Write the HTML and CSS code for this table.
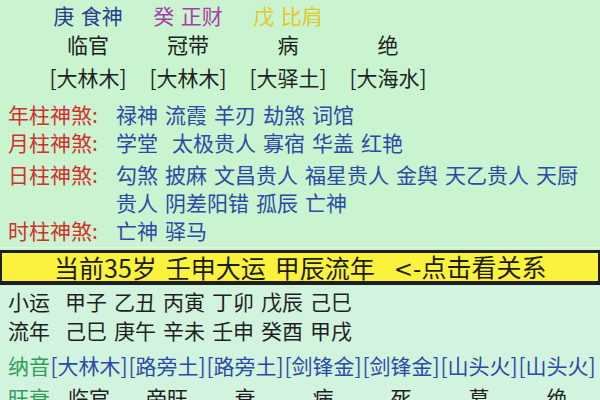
FILE: index.html
```html
<!DOCTYPE html>
<html lang="zh-CN">
<head>
<meta charset="utf-8">
<link rel="stylesheet" href="styles.css">
</head>
<body>
<div class="page">
  <section class="pillars">
    <div class="cell top c-blue">庚 食神</div>
    <div class="cell top c-magenta">癸 正财</div>
    <div class="cell top c-yellow">戊 比肩</div>
    <div class="cell top"></div>
    <div class="cell">临官</div>
    <div class="cell">冠带</div>
    <div class="cell">病</div>
    <div class="cell">绝</div>
    <div class="cell">[大林木]</div>
    <div class="cell">[大林木]</div>
    <div class="cell">[大驿土]</div>
    <div class="cell">[大海水]</div>
  </section>

  <section class="shensha">
    <div class="ss-row">
      <span class="ss-label">年柱神煞:</span>
      <span class="ss-items"><span>禄神</span><span>流霞</span><span>羊刃</span><span>劫煞</span><span>词馆</span></span>
    </div>
    <div class="ss-row">
      <span class="ss-label">月柱神煞:</span>
      <span class="ss-items"><span class="wide">学堂</span><span>太极贵人</span><span>寡宿</span><span>华盖</span><span>红艳</span></span>
    </div>
    <div class="ss-row ss-gap">
      <span class="ss-label">日柱神煞:</span>
      <span class="ss-items"><span>勾煞</span><span>披麻</span><span>文昌贵人</span><span>福星贵人</span><span>金舆</span><span>天乙贵人</span><span>天厨</span></span>
    </div>
    <div class="ss-row">
      <span class="ss-label"></span>
      <span class="ss-items"><span>贵人</span><span>阴差阳错</span><span>孤辰</span><span>亡神</span></span>
    </div>
    <div class="ss-row">
      <span class="ss-label">时柱神煞:</span>
      <span class="ss-items"><span>亡神</span><span>驿马</span></span>
    </div>
  </section>

  <div class="bar">
    <span>当前35岁</span>
    <span>壬申大运</span>
    <span>甲辰流年</span>
    <span class="bar-link"><span class="arrow">&lt;-</span>点击看关系</span>
  </div>

  <section class="yun">
    <div class="yun-row">
      <span class="yun-label">小运</span>
      <span class="yun-items"><span>甲子</span><span>乙丑</span><span>丙寅</span><span>丁卯</span><span>戊辰</span><span>己巳</span></span>
    </div>
    <div class="yun-row">
      <span class="yun-label">流年</span>
      <span class="yun-items"><span>己巳</span><span>庚午</span><span>辛未</span><span>壬申</span><span>癸酉</span><span>甲戌</span></span>
    </div>
    <div class="grid-row nayin">
      <span class="g-label">纳音</span>
      <span class="g-cell">[大林木]</span>
      <span class="g-cell">[路旁土]</span>
      <span class="g-cell">[路旁土]</span>
      <span class="g-cell">[剑锋金]</span>
      <span class="g-cell">[剑锋金]</span>
      <span class="g-cell">[山头火]</span>
      <span class="g-cell">[山头火]</span>
    </div>
    <div class="grid-row wangshuai">
      <span class="g-label">旺衰</span>
      <span class="g-cell">临官</span>
      <span class="g-cell">帝旺</span>
      <span class="g-cell">衰</span>
      <span class="g-cell">病</span>
      <span class="g-cell">死</span>
      <span class="g-cell">墓</span>
      <span class="g-cell">绝</span>
    </div>
  </section>
</div>
</body>
</html>
```

FILE: styles.css
```css
html, body {
  margin: 0;
  padding: 0;
}
body {
  width: 600px;
  height: 400px;
  overflow: hidden;
  background: #c9f4cf;
  font-family: "Noto Sans CJK SC", "Noto Sans", sans-serif;
  font-size: 21px;
  color: #1f1f1f;
}
.page {
  display: flex;
  flex-direction: column;
}

/* pillars */
.pillars {
  display: grid;
  grid-template-columns: repeat(4, 100px);
  grid-template-rows: 30px 28px 38px;
  padding-left: 38px;
  align-items: center;
  line-height: 28px;
}
.cell {
  text-align: center;
  white-space: nowrap;
  word-spacing: 2px;
}
.cell.top {
  line-height: 30px;
}
.c-blue { color: #2b3d8e; }
.c-magenta { color: #a83cab; }
.c-yellow { color: #e4c62c; }

/* shensha */
.shensha {
  margin-top: 4px;
  padding-left: 8px;
  padding-bottom: 3px;
  border-bottom: 1px solid #dcfbe2;
}
.ss-row {
  display: flex;
  line-height: 28px;
  height: 28px;
  white-space: nowrap;
}
.ss-gap {
  margin-top: 4px;
}
.ss-label {
  width: 108px;
  flex: none;
  color: #d2302e;
}
.ss-items {
  display: flex;
  gap: 7px;
  color: #2c4aa6;
}
.ss-items .wide {
  margin-right: 7px;
}

/* bar */
.bar {
  margin-top: 2px;
  height: 28px;
  border-top: 3px solid #1e1e1e;
  border-bottom: 4px solid #1e1e1e;
  border-left: 2px solid #1e1e1e;
  border-right: 2px solid #1e1e1e;
  background: #faf23c;
  display: flex;
  align-items: center;
  padding-left: 52px;
  font-size: 25px;
  line-height: 28px;
  color: #1c1c1c;
  white-space: nowrap;
}
.bar > span + span {
  margin-left: 9px;
}
.bar > .bar-link {
  margin-left: 19px;
}
.arrow {
  font-family: "DejaVu Sans", sans-serif;
  font-size: 23px;
}

/* yun */
.yun {
  background: #d2f3de;
  padding-top: 2px;
  padding-left: 8px;
  height: 120px;
}
.yun-row {
  display: flex;
  line-height: 29px;
  height: 29px;
  white-space: nowrap;
}
.yun-label {
  width: 57px;
  flex: none;
}
.yun-items {
  display: flex;
  gap: 7px;
}
.grid-row {
  display: grid;
  grid-template-columns: 42px repeat(7, 78px);
  line-height: 28px;
  height: 28px;
  white-space: nowrap;
}
.nayin {
  margin-top: 6px;
}
.wangshuai {
  margin-top: 4px;
}
.g-label {
  color: #2f9f5a;
}
.g-cell {
  text-align: center;
}
.nayin .g-cell {
  color: #2c4aa6;
}
```
